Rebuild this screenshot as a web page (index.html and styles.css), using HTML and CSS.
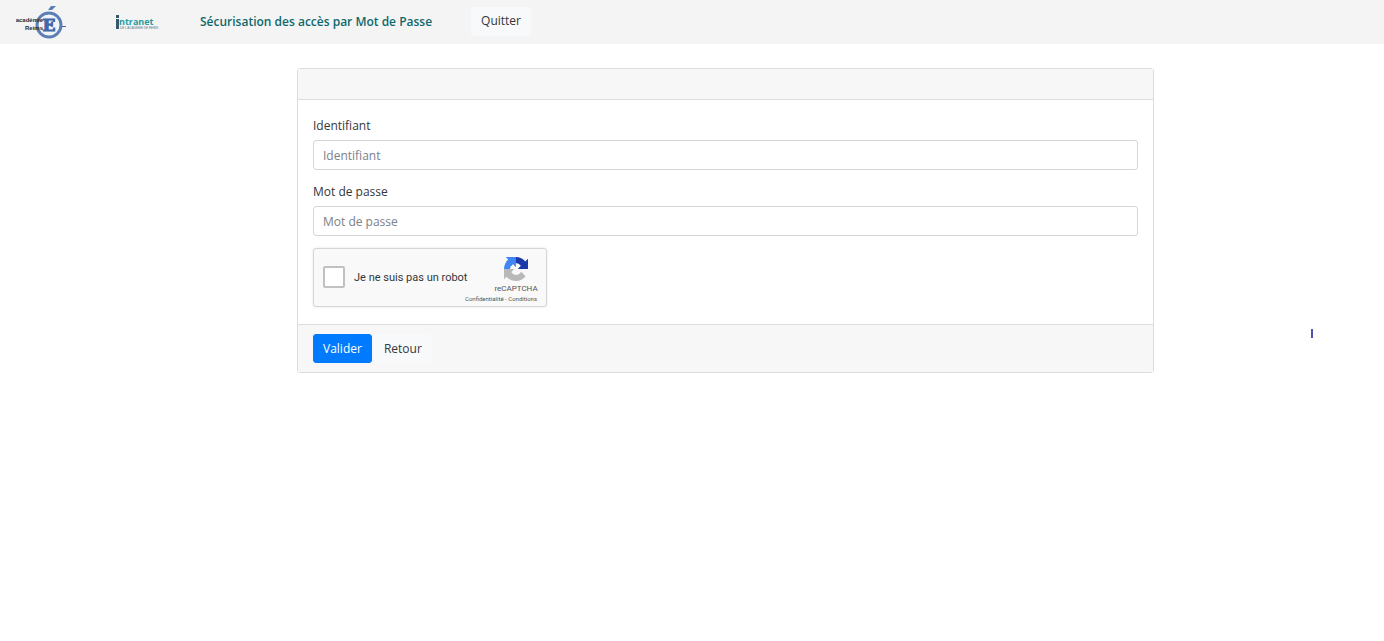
FILE: index.html
```
<!DOCTYPE html>
<html lang="fr">
<head>
<meta charset="utf-8">
<meta name="viewport" content="width=device-width, initial-scale=1">
<title>Sécurisation des accès par Mot de Passe</title>
<link rel="stylesheet" href="styles.css">
</head>
<body>
<header class="navbar">
  <svg class="logo-academie" viewBox="0 0 52 36" role="img" aria-label="Académie Reims">
    <circle cx="33" cy="21" r="12" fill="#f0f4f9" stroke="#5b7fb5" stroke-width="3"/>
    <path d="M32 6 35 2h5l-4 4z" fill="#5b7fb5"/>
    <path d="M46 22.500h4" stroke="#45699f" stroke-width="1"/>
    <text class="logo-e" x="33" y="27" text-anchor="middle">E</text>
    <text class="logo-name" x="27" y="18" text-anchor="end">académie</text>
    <text class="logo-name" x="27" y="26" text-anchor="end">Reims</text>
  </svg>
  <svg class="logo-intranet" viewBox="0 0 44 18" role="img" aria-label="Intranet">
    <path d="M0 6h3v10H0zM0 2h3v3H0z" fill="#35586b"/>
    <text class="intranet-name" x="3" y="12">ntranet</text>
    <text class="intranet-sub" x="4" y="16">DE L'ACADÉMIE DE REIMS</text>
  </svg>
  <h1 class="title">Sécurisation des accès par Mot de Passe</h1>
  <button class="btn btn-light" type="button">Quitter</button>
</header>
<main class="page">
  <form class="card">
    <div class="card-header"></div>
    <div class="card-body">
      <div class="field">
        <label for="login">Identifiant</label>
        <input class="control" id="login" type="text" placeholder="Identifiant">
      </div>
      <div class="field">
        <label for="password">Mot de passe</label>
        <input class="control" id="password" type="password" placeholder="Mot de passe">
      </div>
      <div class="captcha">
        <input class="captcha-box" id="robot" type="checkbox">
        <label class="captcha-label" for="robot">Je ne suis pas un robot</label>
        <div class="captcha-brand">
          <svg class="captcha-logo" viewBox="0 0 64 64" aria-hidden="true">
            <path d="M64 31.960c0-.460-.010-.920-.030-1.370V4.610l-7.180 7.180C50.910 4.580 41.960 0 31.940 0 21.520 0 12.260 4.970 6.400 12.670l11.770 11.900a15.600 15.600 0 0 1 4.760-5.350c2.050-1.600 4.960-2.910 9.010-2.910.490 0 .870.060 1.140.160 5.020.400 9.370 3.170 11.930 7.190l-8.330 8.330L64 31.960" fill="#1c3aa9"/>
            <path d="M31.860 0c-.460 0-.910.010-1.370.030H4.590l7.180 7.180C4.560 13.090 0 22.030 0 32.060c0 10.420 4.970 19.670 12.670 25.520l11.900-11.770a15.600 15.600 0 0 1-5.350-4.760c-1.600-2.050-2.910-4.960-2.910-9.010 0-.490.060-.870.160-1.140.400-5.020 3.170-9.370 7.190-11.930l8.200 8.330L31.860 0" fill="#4285f4"/>
            <path d="M0 32.040c0 .460.010.920.030 1.370v25.980l7.180-7.180C13.090 59.420 22.040 64 32.060 64c10.420 0 19.680-4.970 25.540-12.670L45.830 39.430a15.600 15.600 0 0 1-4.760 5.350c-2.050 1.600-4.960 2.910-9.010 2.910-.490 0-.870-.060-1.140-.160-5.020-.400-9.370-3.170-11.930-7.190l8.330-8.330L0 32.040" fill="#b8b8b8"/>
          </svg>
          <span class="captcha-name">reCAPTCHA</span>
        </div>
        <div class="captcha-links"><a href="#">Confidentialité</a> - <a href="#">Conditions</a></div>
      </div>
    </div>
    <div class="card-footer">
      <button class="btn btn-primary" type="submit">Valider</button>
      <button class="btn btn-light" type="button">Retour</button>
    </div>
  </form>
</main>
<div class="caret"></div>
</body>
</html>
```
FILE: styles.css
```
* { box-sizing: border-box; }
body {
  margin: 0;
  background: #fff;
  color: #33373b;
  font: 12px/18px "Open Sans", "Noto Sans", sans-serif;
}
.navbar {
  display: flex;
  align-items: center;
  height: 44px;
  padding: 0 16px;
  background: #f4f4f4;
}
.logo-academie { width: 52px; height: 36px; margin-right: 48px; flex: none; }
.logo-e { font: bold 17px "DejaVu Serif", serif; fill: #3f68a8; stroke: #3f68a8; stroke-width: 1px; }
.logo-name { font: bold 6px "Liberation Sans Narrow", "Liberation Sans", sans-serif; fill: #2b2b30; }
.logo-intranet { width: 44px; height: 18px; margin-right: 40px; flex: none; }
.intranet-name { font: bold 9px "Open Sans", sans-serif; fill: #299a9f; }
.intranet-sub { font: 3px "Liberation Sans", sans-serif; fill: #56767f; }
.title {
  margin: 0 39px 0 0;
  color: #0f686c;
  font-size: 12px;
  font-weight: 600;
  line-height: 18px;
}
.btn {
  height: 29px;
  padding: 0 9px;
  border: 1px solid transparent;
  border-radius: 3px;
  font: inherit;
}
.btn-light { background: #f8f9fa; color: #33373b; }
.navbar .btn { margin-bottom: 2px; }
.btn-primary { background: #007bff; border-color: #007bff; color: #fff; }
.page {
  display: grid;
  grid-template-columns: 297fr 857fr 230fr;
  padding-top: 24px;
}
.card {
  grid-column: 2;
  border: 1px solid #dcdcdc;
  border-radius: 3px;
}
.card-header { height: 31px; background: #f7f7f7; border-bottom: 1px solid #dcdcdc; }
.card-body { padding: 17px 15px; }
.field { display: grid; gap: 5px; margin-bottom: 13px; }
.field + .field { margin-bottom: 12px; }
.control {
  width: 100%;
  height: 30px;
  padding: 0 9px;
  border: 1px solid #d3d7db;
  border-radius: 3px;
  background: #fff;
  color: #495057;
  font: inherit;
}
.control::placeholder { color: #7a8188; opacity: 1; }
.captcha {
  display: grid;
  grid-template-columns: 22px 1fr 42px;
  grid-template-rows: 38px 8px;
  column-gap: 9px;
  width: 234px;
  height: 59px;
  padding: 8px 9px 3px;
  border: 1px solid #d6d6d6;
  border-radius: 3px;
  background: #f9f9f9;
  box-shadow: 0 0 3px rgba(0, 0, 0, 0.1);
  font-family: Roboto, sans-serif;
}
.captcha-box {
  appearance: none;
  width: 22px;
  height: 22px;
  margin: 9px 0 0;
  border: 2px solid #c1c1c1;
  border-radius: 2px;
  background: #fff;
}
.captcha-label { padding-top: 12px; font-size: 11px; line-height: 18px; white-space: nowrap; }
.captcha-brand { display: flex; flex-direction: column; align-items: center; color: #555; }
.captcha-logo { width: 24px; height: 24px; flex: none; }
.captcha-name { padding-top: 3px; font-size: 8px; line-height: 10px; }
.captcha-links {
  grid-column: 1 / -1;
  color: #555;
  font-size: 6px;
  line-height: 8px;
  text-align: right;
}
.captcha-links a { color: inherit; text-decoration: none; }
.card-footer {
  display: flex;
  gap: 2px;
  padding: 9px 15px;
  background: #f7f7f7;
  border-top: 1px solid #dcdcdc;
}
.caret {
  position: absolute;
  top: 329px;
  right: 71px;
  width: 2px;
  height: 9px;
  background: #5450b0;
}
```
